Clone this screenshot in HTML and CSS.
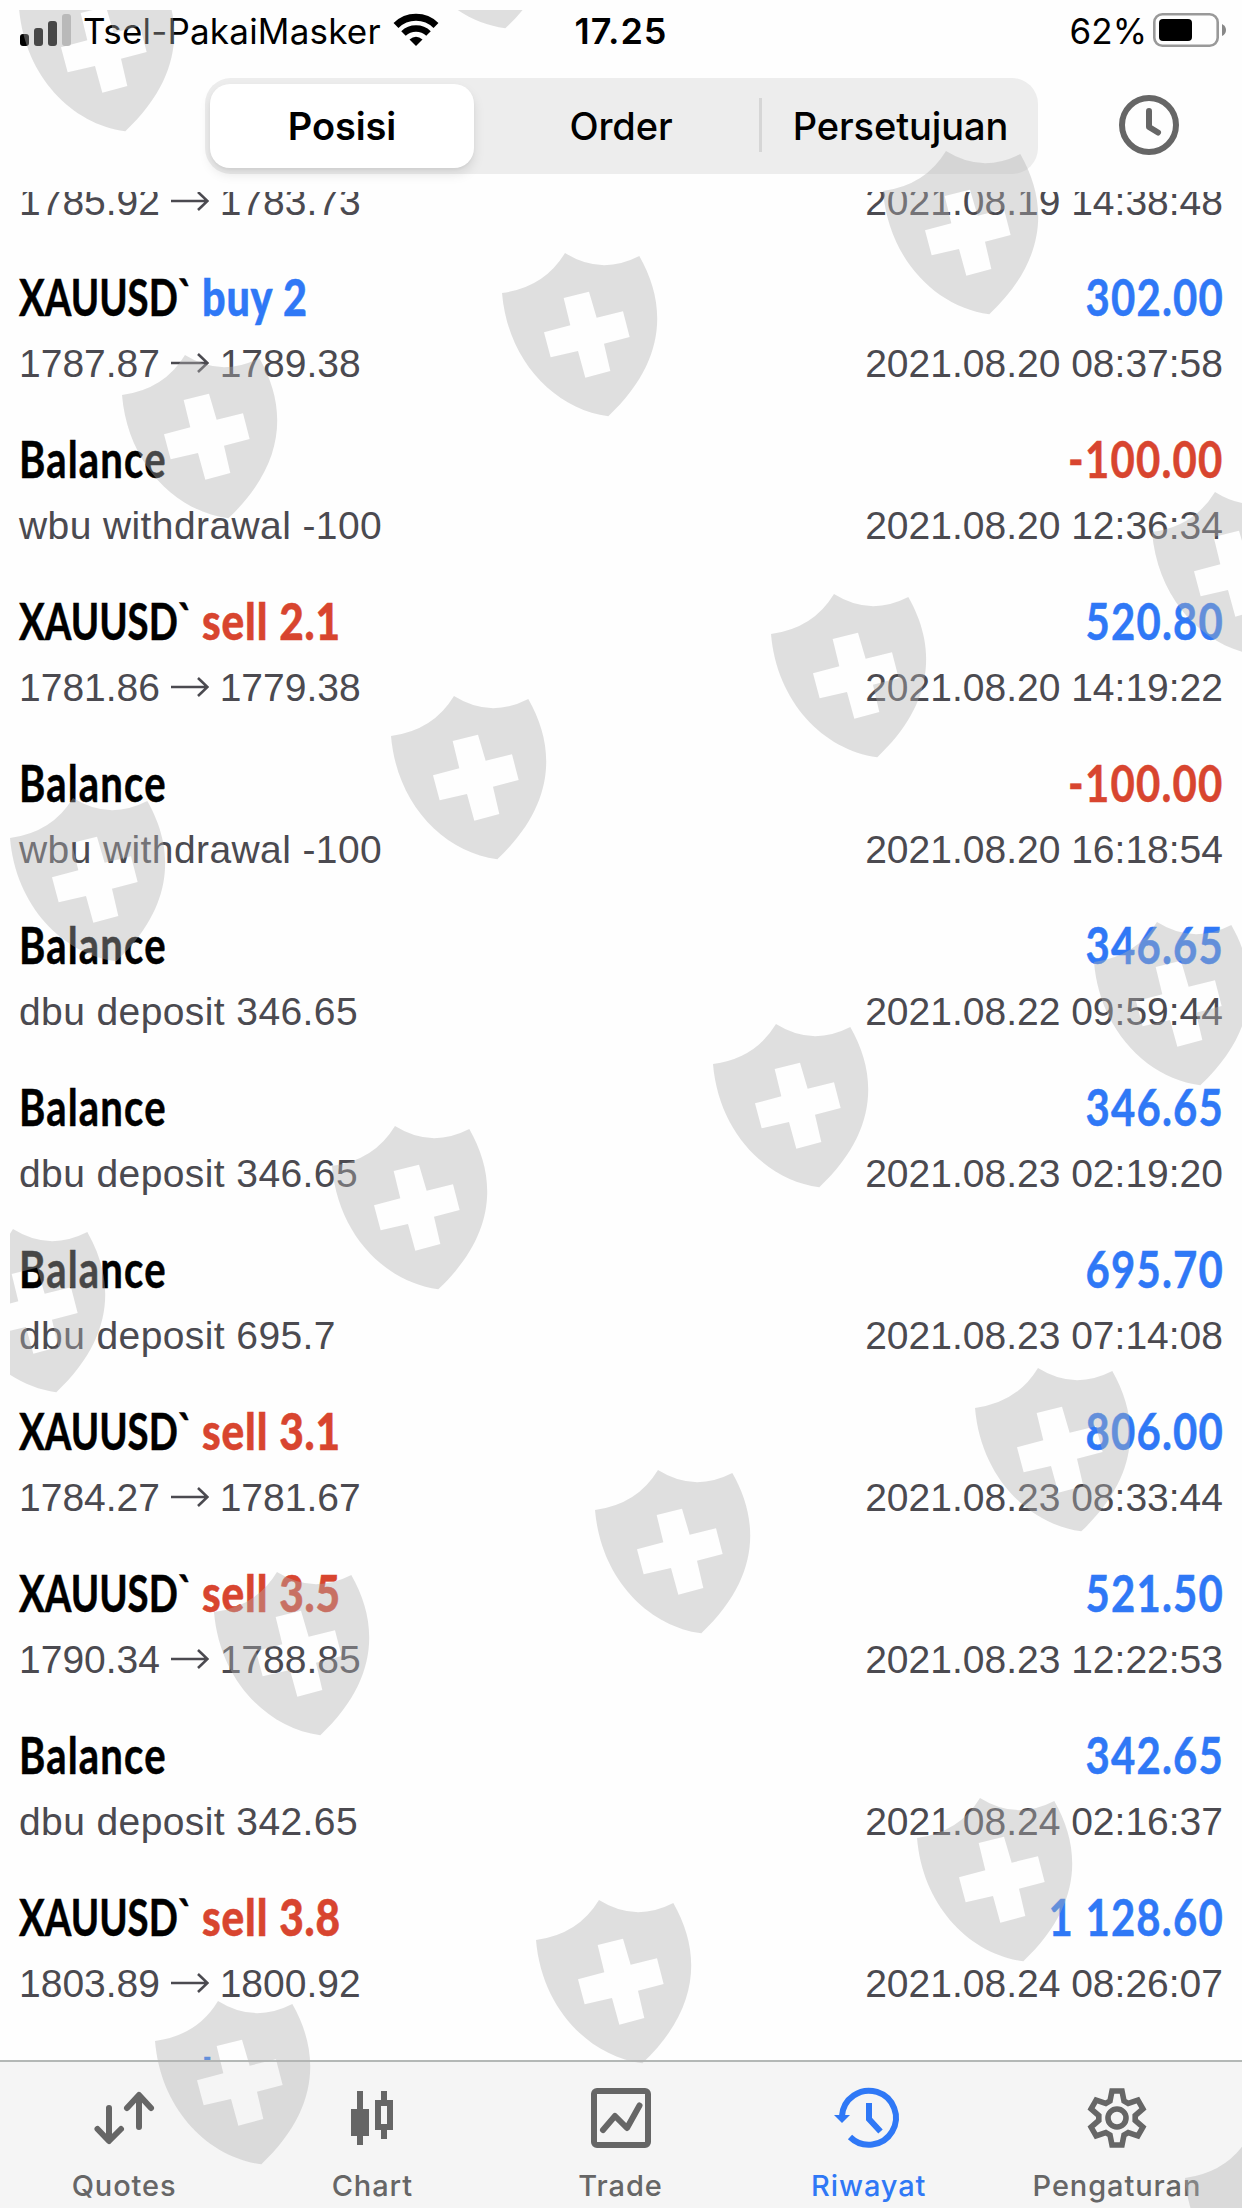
FILE: index.html
```html
<!DOCTYPE html>
<html lang="id">

<head>
    <meta charset="UTF-8">
    <meta name="viewport" content="width=device-width, initial-scale=1.0">
    <title>Riwayat</title>
    <link rel="stylesheet" href="styles.css">
</head>

<body>
    <div class="screen">
        <div class="status-bar">
            <div class="status-left">
                <svg class="signal" width="52" height="34" viewBox="0 0 52 34">
                    <rect x="0" y="21" width="9" height="12" rx="3" />
                    <rect x="14" y="15" width="9" height="18" rx="3" />
                    <rect x="28" y="8" width="9" height="25" rx="3" />
                    <rect x="42" y="1" width="9" height="32" rx="3" opacity="0.25" />
                </svg>
                <span class="carrier">Tsel-PakaiMasker</span>
                <svg class="wifi" width="46" height="34" viewBox="0 0 46 34">
                    <path d="M3 12.5 A28.5 28.5 0 0 1 43 12.5" fill="none" stroke="#000" stroke-width="7" />
                    <path d="M10.5 20.5 A18 18 0 0 1 35.5 20.5" fill="none" stroke="#000" stroke-width="6.5" />
                    <path d="M16.5 26.5 Q23 21 29.5 26.5 L23 33 Z" />
                </svg>
            </div>
            <div class="status-time">17.25</div>
            <div class="status-right">
                <span class="percent">62%</span>
                <svg class="battery" width="74" height="34" viewBox="0 0 74 34">
                    <rect x="1.3" y="1.3" width="63.4" height="31.4" rx="8" fill="none" stroke="#999" stroke-width="2.6" />
                    <rect x="6" y="6" width="33" height="22" rx="4" />
                    <path d="M69 11 Q73 13 73 17 Q73 21 69 23 Z" fill="#888" />
                </svg>
            </div>
        </div>

        <div class="header">
            <div class="segmented">
                <div class="segment active"><span>Posisi</span></div>
                <div class="segment"><span>Order</span></div>
                <div class="segment divided"><span>Persetujuan</span></div>
            </div>
            <svg class="clock" width="60" height="60" viewBox="0 0 60 60">
                <circle cx="30" cy="30" r="27" />
                <path d="M30 16 V32 L39 37.5" />
            </svg>
        </div>

        <div class="list">
            <div class="row partial">
                <div class="line detail"><span>1785.92 <svg class="arrow" viewBox="0 0 38 22"><path d="M0 11 H36 M27 2 L36.5 11 L27 20" /></svg> 1783.73</span><span>2021.08.19 14:38:48</span></div>
            </div>
            <div class="row">
                <div class="line title"><div class="name"><span class="symbol">XAUUSD`</span><b class="buy">buy 2</b></div><span class="amount buy">302.00</span></div>
                <div class="line detail"><span>1787.87 <svg class="arrow" viewBox="0 0 38 22"><path d="M0 11 H36 M27 2 L36.5 11 L27 20" /></svg> 1789.38</span><span>2021.08.20 08:37:58</span></div>
            </div>
            <div class="row">
                <div class="line title"><span class="balance">Balance</span><span class="amount sell">-100.00</span></div>
                <div class="line detail"><span class="note">wbu withdrawal -100</span><span>2021.08.20 12:36:34</span></div>
            </div>
            <div class="row">
                <div class="line title"><div class="name"><span class="symbol">XAUUSD`</span><b class="sell">sell 2.1</b></div><span class="amount buy">520.80</span></div>
                <div class="line detail"><span>1781.86 <svg class="arrow" viewBox="0 0 38 22"><path d="M0 11 H36 M27 2 L36.5 11 L27 20" /></svg> 1779.38</span><span>2021.08.20 14:19:22</span></div>
            </div>
            <div class="row">
                <div class="line title"><span class="balance">Balance</span><span class="amount sell">-100.00</span></div>
                <div class="line detail"><span class="note">wbu withdrawal -100</span><span>2021.08.20 16:18:54</span></div>
            </div>
            <div class="row">
                <div class="line title"><span class="balance">Balance</span><span class="amount buy">346.65</span></div>
                <div class="line detail"><span class="note">dbu deposit 346.65</span><span>2021.08.22 09:59:44</span></div>
            </div>
            <div class="row">
                <div class="line title"><span class="balance">Balance</span><span class="amount buy">346.65</span></div>
                <div class="line detail"><span class="note">dbu deposit 346.65</span><span>2021.08.23 02:19:20</span></div>
            </div>
            <div class="row">
                <div class="line title"><span class="balance">Balance</span><span class="amount buy">695.70</span></div>
                <div class="line detail"><span class="note">dbu deposit 695.7</span><span>2021.08.23 07:14:08</span></div>
            </div>
            <div class="row">
                <div class="line title"><div class="name"><span class="symbol">XAUUSD`</span><b class="sell">sell 3.1</b></div><span class="amount buy">806.00</span></div>
                <div class="line detail"><span>1784.27 <svg class="arrow" viewBox="0 0 38 22"><path d="M0 11 H36 M27 2 L36.5 11 L27 20" /></svg> 1781.67</span><span>2021.08.23 08:33:44</span></div>
            </div>
            <div class="row">
                <div class="line title"><div class="name"><span class="symbol">XAUUSD`</span><b class="sell">sell 3.5</b></div><span class="amount buy">521.50</span></div>
                <div class="line detail"><span>1790.34 <svg class="arrow" viewBox="0 0 38 22"><path d="M0 11 H36 M27 2 L36.5 11 L27 20" /></svg> 1788.85</span><span>2021.08.23 12:22:53</span></div>
            </div>
            <div class="row">
                <div class="line title"><span class="balance">Balance</span><span class="amount buy">342.65</span></div>
                <div class="line detail"><span class="note">dbu deposit 342.65</span><span>2021.08.24 02:16:37</span></div>
            </div>
            <div class="row">
                <div class="line title"><div class="name"><span class="symbol">XAUUSD`</span><b class="sell">sell 3.8</b></div><span class="amount buy">1 128.60</span></div>
                <div class="line detail"><span>1803.89 <svg class="arrow" viewBox="0 0 38 22"><path d="M0 11 H36 M27 2 L36.5 11 L27 20" /></svg> 1800.92</span><span>2021.08.24 08:26:07</span></div>
            </div>
            <div class="row next">
                <div class="line title"><div class="name"><span class="symbol"></span><b class="buy">b</b></div></div>
            </div>
        </div>

        <div class="tab-bar">
            <div class="tab">
                <svg class="icon rounded" viewBox="0 0 60 60">
                    <path d="M15 20 V52 M3.5 41 L15 53 L27 41" />
                    <path d="M45 39 V8 M33 20 L45 7 L57 20" />
                </svg>
                <span>Quotes</span>
            </div>
            <div class="tab">
                <svg class="icon candles" viewBox="0 0 60 60">
                    <path d="M15 3 h6 v18 h6 v27 h-6 v9 h-6 v-9 h-6 v-27 h6 Z" />
                    <path d="M39 3 h6 v9 h6 v30 h-6 v9 h-6 v-9 h-6 v-30 h6 Z M39 18 v18 h6 v-18 Z" />
                </svg>
                <span>Chart</span>
            </div>
            <div class="tab">
                <svg class="icon rounded" viewBox="0 0 60 60">
                    <rect x="3" y="3" width="54" height="54" rx="3" />
                    <path d="M12 42 L24 28 L36 40 L48.5 17.5" />
                </svg>
                <span>Trade</span>
            </div>
            <div class="tab selected">
                <svg class="icon" viewBox="0 0 60 60">
                    <path d="M3 28 A27 27 0 1 1 11 49" />
                    <path d="M30 15 V31 L41.5 43.5" />
                    <path class="head" d="M-5 27 H11 L3 35 Z" />
                </svg>
                <span>Riwayat</span>
            </div>
            <div class="tab">
                <svg class="icon gear" viewBox="0 0 60 60">
                    <path d="M25 3 L35 3 L37 13 L41.2 15.4 L50.9 12.2 L55.9 20.8 L48.2 27.6 L48.2 32.4 L55.9 39.2 L50.9 47.8 L41.2 44.6 L37 47 L35 57 L25 57 L23 47 L18.8 44.6 L9.1 47.8 L4.1 39.2 L11.8 32.4 L11.8 27.6 L4.1 20.8 L9.1 12.2 L18.8 15.4 L23 13 Z" />
                    <circle cx="30" cy="30" r="9" />
                </svg>
                <span>Pengaturan</span>
            </div>
        </div>

        <!-- shield pattern over everything -->
        <svg class="watermark" viewBox="10 10 1232 2198">
            <defs>
                <path id="shield" transform="scale(0.3333)" fill-rule="evenodd" d="M0 120 Q127 103 189 0 Q297 68 412 9 C494 153 496 323 319 490 C157 468 17 323 0 120 Z M185 135 L261 116 L284 194 L363 175 L383 252 L306 272 L325 354 L250 374 L228 294 L146 313 L126 238 L205 217 Z" />
            </defs>
            <use href="#shield" x="19" y="-32" />
            <use href="#shield" x="399" y="-135" />
            <use href="#shield" x="883" y="151" />
            <use href="#shield" x="502" y="253" />
            <use href="#shield" x="122" y="355" />
            <use href="#shield" x="1152" y="492" />
            <use href="#shield" x="771" y="594" />
            <use href="#shield" x="391" y="696" />
            <use href="#shield" x="10" y="798" />
            <use href="#shield" x="1094" y="922" />
            <use href="#shield" x="713" y="1024" />
            <use href="#shield" x="332" y="1126" />
            <use href="#shield" x="-50" y="1229" />
            <use href="#shield" x="975" y="1368" />
            <use href="#shield" x="595" y="1470" />
            <use href="#shield" x="214" y="1572" />
            <use href="#shield" x="917" y="1798" />
            <use href="#shield" x="536" y="1900" />
            <use href="#shield" x="155" y="2001" />
            <use href="#shield" x="1185" y="2138" />
        </svg>
    </div>
</body>

</html>
```
FILE: styles.css
```css
body {
    margin: 0;
    background-color: #fefefe;
}

.screen {
    position: relative;
    display: flex;
    flex-direction: column;
    width: 1242px;
    height: 2208px;
    overflow: hidden;
    font-family: Inter, "Liberation Sans", sans-serif;
    color: #000;
}

/* status bar */
.status-bar {
    display: grid;
    grid-template-columns: 1fr auto 1fr;
    align-items: center;
    height: 64px;
    padding: 0 15px 2px;
    box-sizing: border-box;
    font-size: 35px;
    line-height: 62px;
}

.status-left,
.status-right {
    display: flex;
    align-items: center;
}

.status-left {
    padding-left: 5px;
}

.status-right {
    justify-content: flex-end;
}

.status-bar svg {
    margin-bottom: 3px;
}

.carrier {
    margin: 0 12px 0 11px;
    letter-spacing: 0.2px;
}

.status-time {
    font-size: 36px;
    font-weight: 600;
    letter-spacing: 1px;
}

.percent {
    margin-right: 6px;
}

/* header */
.header {
    display: flex;
    align-items: center;
    height: 128px;
    flex-shrink: 0;
    box-sizing: border-box;
    padding: 0 63px 4px 205px;
    justify-content: space-between;
}

.segmented {
    display: grid;
    grid-template-columns: 264px 294px 265px;
    box-sizing: border-box;
    width: 833px;
    height: 96px;
    padding: 6px 5px;
    border-radius: 26px;
    background-color: #ededed;
}

.segment {
    position: relative;
    display: flex;
    align-items: center;
    justify-content: center;
    font-size: 38px;
    font-weight: 500;
    letter-spacing: -0.1px;
}

.segment.active {
    border-radius: 20px;
    background-color: #fff;
    font-weight: 600;
    box-shadow: 0 6px 12px rgba(0, 0, 0, 0.1), 0 2px 3px rgba(0, 0, 0, 0.04);
}

.divided::before {
    content: "";
    position: absolute;
    top: 14px;
    left: -9px;
    width: 3px;
    height: 54px;
    background-color: #d6d6d6;
}

.clock {
    margin-bottom: 2px;
    fill: none;
    stroke: #666;
    stroke-width: 6;
    stroke-linecap: round;
    stroke-linejoin: round;
}

/* history list */
.list {
    flex: 1;
    overflow: hidden;
}

.row {
    height: 162px;
    padding: 0 18px 0 19px;
}

/* first row is scrolled half way under the header */
.row.partial {
    height: 95px;
    margin-top: -20px;
}

.row.next {
    margin-top: -3px;
}

.line {
    display: flex;
    justify-content: space-between;
    height: 60px;
    line-height: 60px;
    white-space: pre;
}

.title {
    margin-bottom: 7px;
    font-family: Lato, sans-serif;
    font-size: 51px;
    font-weight: 700;
    -webkit-text-stroke: 0.5px;
}

.name {
    display: flex;
}

.symbol {
    flex-shrink: 0;
    width: 183px;
    transform: scaleX(0.752);
    transform-origin: left;
}

.name b {
    letter-spacing: 1px;
    transform: scaleX(0.81);
    transform-origin: left;
}

.name b.sell {
    transform: scaleX(0.83);
}

.balance {
    letter-spacing: 1.5px;
    transform: scaleX(0.785);
    transform-origin: left;
}

.amount {
    letter-spacing: 1.5px;
    transform: scaleX(0.82);
    transform-origin: right;
}

.buy {
    color: #2f78f6;
}

.sell {
    color: #d8452f;
}

.detail {
    padding-right: 1px;
    font-family: "Liberation Sans", Arial, sans-serif;
    font-size: 39px;
    color: #4b4a50;
}

.note {
    letter-spacing: 0.4px;
}

.arrow {
    width: 38px;
    height: 22px;
    vertical-align: 3px;
    fill: none;
    stroke: #4b4a50;
    stroke-width: 2.6;
}

/* bottom tabs */
.tab-bar {
    display: flex;
    flex-shrink: 0;
    box-sizing: border-box;
    height: 148px;
    padding-top: 26px;
    padding-right: 1px;
    border-top: 2px solid #b4b8b6;
    background-color: #f5f5f5;
}

.tab {
    display: flex;
    flex: 1;
    flex-direction: column;
    align-items: center;
    font-size: 29px;
    font-weight: 500;
    line-height: 40px;
    letter-spacing: 0.9px;
    color: #666;
}

.tab span {
    margin-top: 18px;
}

.icon {
    width: 60px;
    height: 60px;
    overflow: visible;
    fill: none;
    stroke: currentColor;
    stroke-width: 6;
}

.rounded {
    stroke-linecap: round;
    stroke-linejoin: round;
}

.candles {
    fill: currentColor;
    fill-rule: evenodd;
    stroke: none;
}

.head {
    fill: currentColor;
    stroke: none;
}

.gear {
    stroke-width: 5.6;
}

.selected {
    color: #2f78f6;
}

.watermark {
    position: absolute;
    top: 10px;
    left: 10px;
    width: 1232px;
    height: 2198px;
    overflow: hidden;
    fill: rgba(178, 178, 178, 0.4);
    pointer-events: none;
}
```
